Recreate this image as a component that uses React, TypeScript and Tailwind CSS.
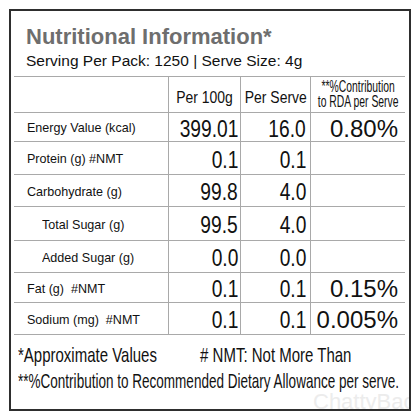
const rows = [
  { label: 'Energy Value (kcal)', a: '399.01', b: '16.0', c: '0.80%', h: 'h-[29px]', indent: false },
  { label: 'Protein (g) #NMT', a: '0.1', b: '0.1', c: '', h: 'h-[33px]', indent: false },
  { label: 'Carbohydrate (g)', a: '99.8', b: '4.0', c: '', h: 'h-[32px]', indent: false },
  { label: 'Total Sugar (g)', a: '99.5', b: '4.0', c: '', h: 'h-[34px]', indent: true },
  { label: 'Added Sugar (g)', a: '0.0', b: '0.0', c: '', h: 'h-[32px]', indent: true },
  { label: 'Fat (g)  #NMT', a: '0.1', b: '0.1', c: '0.15%', h: 'h-[30px]', indent: false },
  { label: 'Sodium (mg)  #NMT', a: '0.1', b: '0.1', c: '0.005%', h: 'h-[33px]', indent: false },
];

export default function App() {
  return (
    <div className="h-[420px] w-[420px] bg-white p-[9px] font-['Liberation_Sans',Arial,sans-serif] text-[#111]">
      <div className="relative h-[402px] w-[402px] overflow-hidden border-2 border-[#2e2e2e]">
        <div className="pl-[15px] pt-[13px]">
          <h1 className="text-[22px] font-bold leading-[26px] text-[#6e6e6e]">Nutritional Information*</h1>
          <p className="mt-px text-[15.5px] leading-[20px]">Serving Per Pack: 1250 | Serve Size: 4g</p>
        </div>

        <div className="ml-[3px] mt-[5px] w-[391px]">
          <div className="grid h-[36px] grid-cols-[154px_72px_70px_95px] border-t border-[#a9a9a9]">
            <div />
            <div className="flex items-end justify-center border-l border-[#a9a9a9] pb-[4px]">
              <span className="inline-block origin-center scale-x-[0.82] whitespace-nowrap text-[17px] leading-[20px]">Per 100g</span>
            </div>
            <div className="flex items-end justify-center border-l border-[#a9a9a9] pb-[4px]">
              <span className="inline-block origin-center scale-x-[0.82] whitespace-nowrap text-[17px] leading-[20px]">Per Serve</span>
            </div>
            <div className="flex items-end justify-center border-l border-[#a9a9a9] pb-[3px]">
              <span className="inline-block origin-center scale-x-[0.61] whitespace-nowrap text-center text-[17px] leading-[15px]">
                **%Contribution
                <br />
                to RDA per Serve
              </span>
            </div>
          </div>

          {rows.map((r, i) => (
            <div
              key={r.label}
              className={`grid grid-cols-[154px_72px_70px_95px] border-t border-[#a9a9a9] ${r.h} ${i === rows.length - 1 ? 'border-b' : ''}`}
            >
              <div className={`flex items-center pt-[2px] text-[13.5px] leading-[16px] whitespace-pre ${r.indent ? 'pl-[28px]' : 'pl-[13px]'}`}>
                <span className="inline-block origin-left scale-x-[0.93]">{r.label}</span>
              </div>
              <div className="flex items-center justify-end border-l border-[#a9a9a9] pr-[2px] pt-[3px]">
                <span className="inline-block origin-right scale-x-[0.8] text-[24px] leading-[24px]">{r.a}</span>
              </div>
              <div className="flex items-center justify-end border-l border-[#a9a9a9] pr-[4px] pt-[3px]">
                <span className="inline-block origin-right scale-x-[0.8] text-[24px] leading-[24px]">{r.b}</span>
              </div>
              <div className="flex items-center justify-end border-l border-[#a9a9a9] pr-[7px] pt-[3px]">
                <span className="text-[24px] leading-[24px]">{r.c}</span>
              </div>
            </div>
          ))}
        </div>

        <div className="ml-[7px] mt-[7px] whitespace-nowrap text-[21px] leading-[26px]">
          <div className="flex w-max origin-left scale-x-[0.714]">
            <span className="w-[255px]">*Approximate Values</span>
            <span># NMT: Not More Than</span>
          </div>
          <div className="w-max origin-left scale-x-[0.644]">**%Contribution to Recommended Dietary Allowance per serve.</div>
        </div>

        <span className="absolute left-[302px] top-[378px] text-[22px] leading-[26px] text-[#ececec]">ChattyBao</span>
      </div>
    </div>
  );
}
